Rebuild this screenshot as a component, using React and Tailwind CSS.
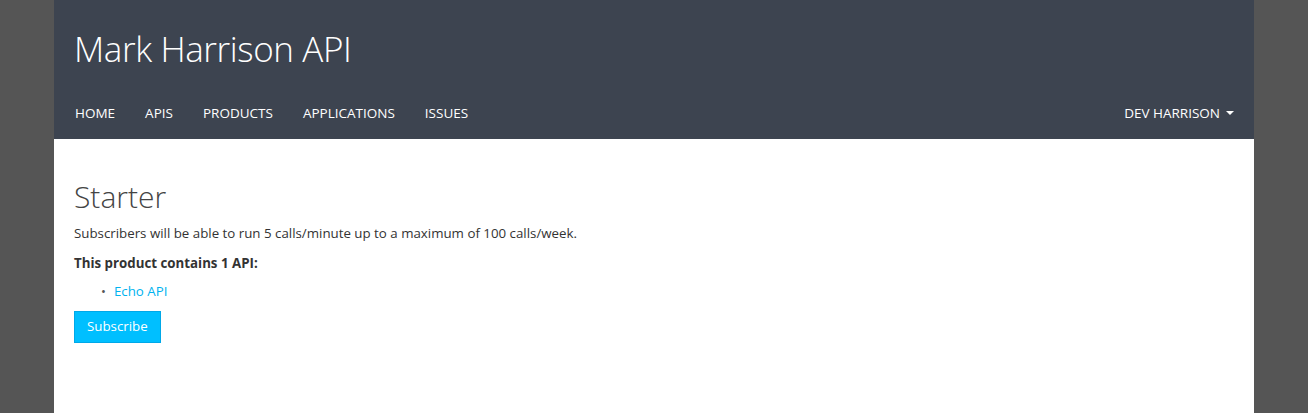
export default function App() {
  const nav = ["HOME", "APIS", "PRODUCTS", "APPLICATIONS", "ISSUES"];
  return (
    <div className="min-h-[413px] bg-[#555555] font-['Open_Sans',sans-serif]">
      <div className="mx-auto w-[1200px] min-h-[413px] bg-white">
        {/* Header */}
        <header className="h-[139px] bg-[#3d4450] px-[20px]">
          <div className="pt-[26px] h-[88px]">
            <h1 className="text-[35px] leading-[46px] font-light text-white tracking-[-0.4px]">
              Mark Harrison API
            </h1>
          </div>
          <nav className="flex items-center justify-between h-[50px] pl-[1px]">
            <ul className="flex gap-[30px] text-[13.5px] text-white">
              {nav.map((n) => (
                <li key={n}>{n}</li>
              ))}
            </ul>
            <div className="flex items-center gap-[6px] text-[13.5px] text-white">
              DEV HARRISON
              <span className="inline-block w-0 h-0 border-l-[4px] border-r-[4px] border-t-[4px] border-l-transparent border-r-transparent border-t-white"></span>
            </div>
          </nav>
        </header>

        {/* Content */}
        <main className="px-[20px] pt-[40px] text-[#333] text-[13.3px]">
          <h2 className="text-[30px] leading-[36px] font-light text-[#444]">Starter</h2>
          <p className="leading-[20px] mt-[8px]">
            Subscribers will be able to run 5 calls/minute up to a maximum of 100 calls/week.
          </p>
          <p className="leading-[20px] font-bold mt-[10px]">This product contains 1 API:</p>
          <ul className="mt-[8px] pl-[27px] leading-[20px]">
            <li className="flex items-center gap-[8px]">
              <span className="text-[#555] text-[13px]">•</span>
              <a className="text-[#00b3ef]">Echo API</a>
            </li>
          </ul>
          <button className="mt-[10px] h-[32px] px-[12px] bg-[#00bfff] border border-[#00a8e8] text-white">
            Subscribe
          </button>
        </main>
      </div>
    </div>
  );
}
